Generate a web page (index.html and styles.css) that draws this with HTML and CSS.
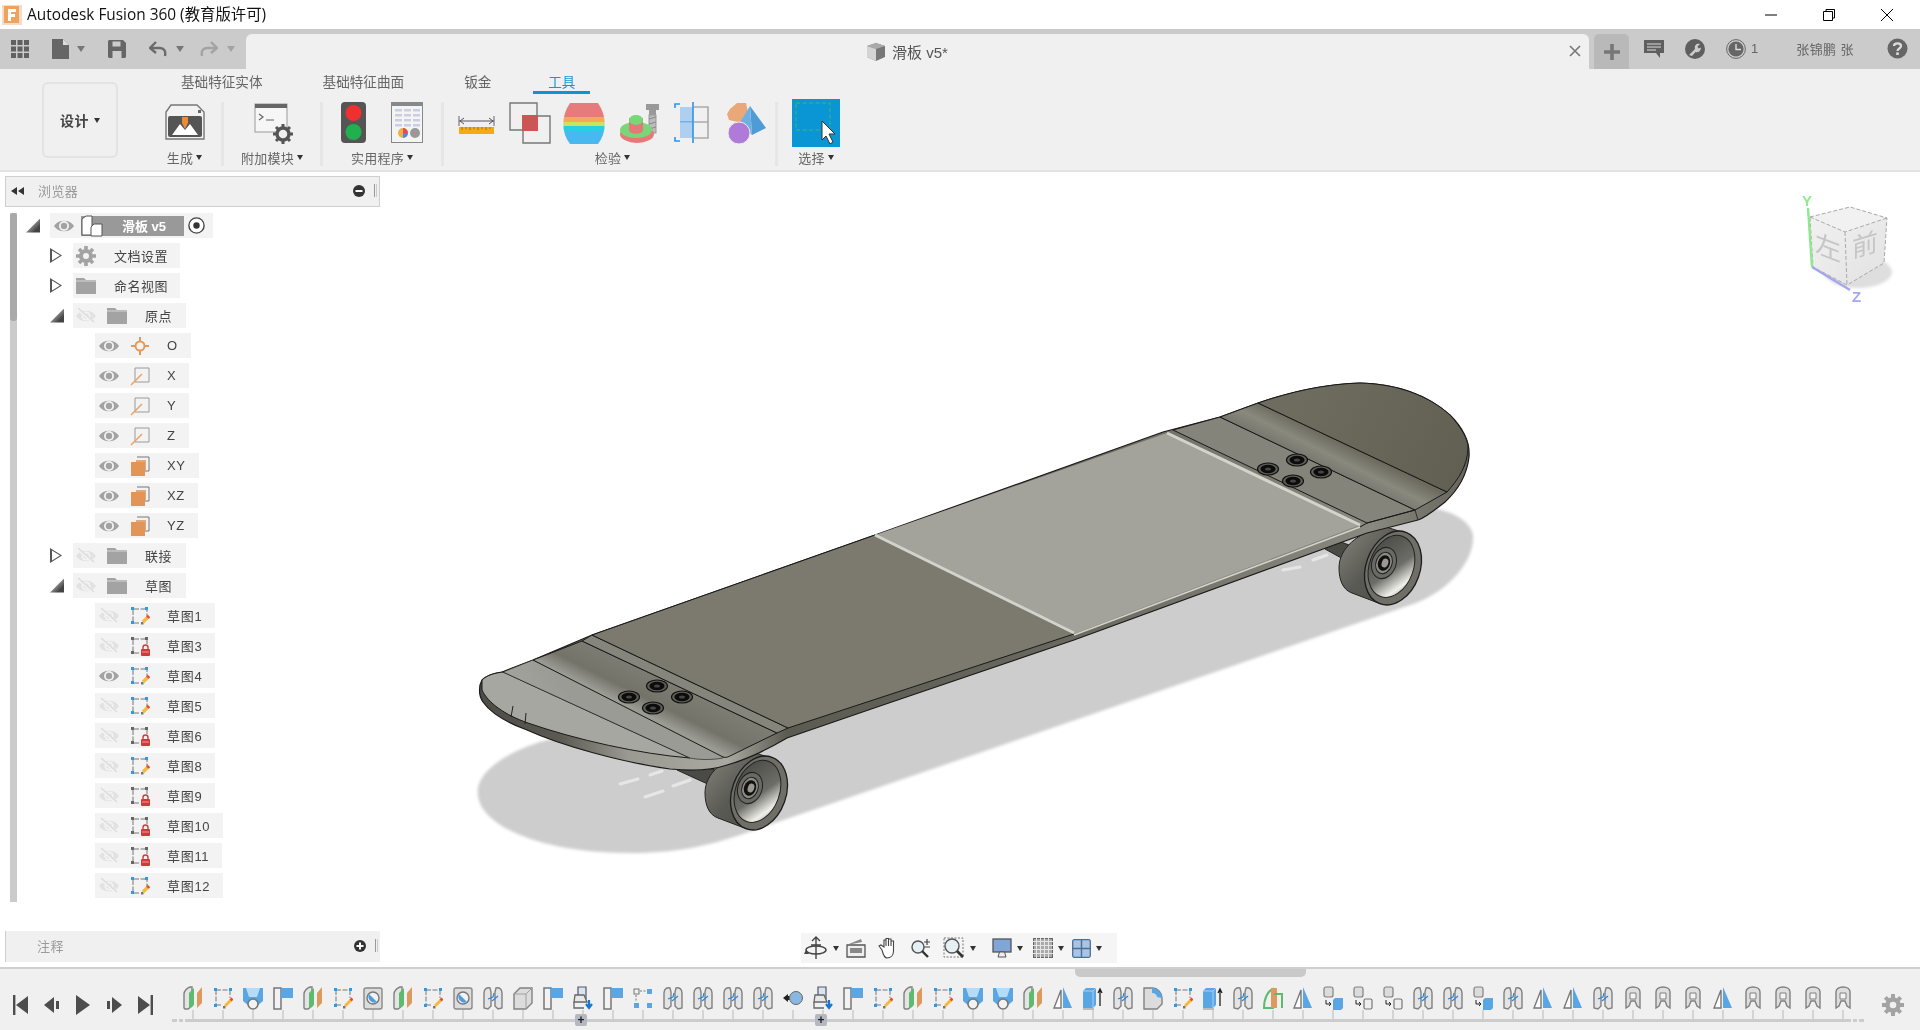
FILE: index.html
```html
<!DOCTYPE html>
<html lang="zh">
<head>
<meta charset="utf-8">
<title>Autodesk Fusion 360</title>
<link rel="stylesheet" href="styles.css">
</head>
<body>
<svg class="defs" width="0" height="0" aria-hidden="true">
<defs>
<symbol id="eye" viewBox="0 0 20 20"><path d="M0 10C4 3 16 3 20 10C16 17 4 17 0 10Z" fill="#a2a2a2"/><circle cx="10" cy="10" r="5" fill="#f3f3f3"/><circle cx="10" cy="10" r="3.2" fill="#a2a2a2"/></symbol>
<symbol id="eyeoff" viewBox="0 0 20 20"><path d="M0 10C4 3 16 3 20 10C16 17 4 17 0 10Z" fill="#e2e2e2"/><circle cx="10" cy="10" r="4.6" fill="#f3f3f3"/><circle cx="10" cy="10" r="2.8" fill="#e2e2e2"/><path d="M2 3L18 17" stroke="#f3f3f3" stroke-width="3"/><path d="M2 2L18 16" stroke="#dcdcdc" stroke-width="1.5"/></symbol>
<symbol id="gear" viewBox="0 0 20 20"><path d="M10 3a7 7 0 1 0 0 14a7 7 0 0 0 0-14Zm0 4a3 3 0 1 1 0 6a3 3 0 0 1 0-6Z" fill="#a3a3a3"/><g stroke="#a3a3a3" stroke-width="3.6"><path d="M10 0V4M10 16V20M0 10H4M16 10H20M3 3L5.8 5.8M14.2 14.2L17 17M17 3L14.2 5.8M5.8 14.2L3 17"/></g></symbol>
<symbol id="folder" viewBox="0 0 20 20"><path d="M0 2H8L10 4H20V18H0Z" fill="#a3a3a3"/><path d="M0 5H20" stroke="#d6d6d6" stroke-width="1"/></symbol>
<symbol id="origin" viewBox="0 0 20 20"><circle cx="10" cy="10" r="4.5" fill="none" stroke="#e29a5c" stroke-width="2"/><path d="M10 1V6M10 14V19M1 10H6M14 10H19" stroke="#e29a5c" stroke-width="2"/></symbol>
<symbol id="axis" viewBox="0 0 20 20"><path d="M5 2H19V16H5Z" fill="none" stroke="#9a9a9a" stroke-width="1"/><path d="M1 19L12 8" stroke="#e8a66c" stroke-width="1.6"/></symbol>
<symbol id="plane" viewBox="0 0 20 20"><path d="M7 1H19V15H15" fill="none" stroke="#777" stroke-width="1"/><path d="M6 4H16V14H6Z" fill="#dcab85"/><path d="M1 6H15V20H1Z" fill="#e29556"/></symbol>
<symbol id="sk-edit" viewBox="0 0 20 20"><path d="M3 3H17M3 3V17M3 17H10" stroke="#777" stroke-width="1" stroke-dasharray="6 1.5" fill="none"/><path d="M17 3V11" stroke="#777" stroke-dasharray="3 1.5"/><g fill="#2c9ae8"><rect x="1" y="1" width="3" height="3"/><rect x="15" y="1" width="3" height="3"/><rect x="1" y="15" width="3" height="3"/></g><rect x="11" y="16" width="2.5" height="2.5" fill="#777"/><path d="M13 16L18 11" stroke="#f4b93e" stroke-width="3.4"/><path d="M17.4 11.6L19 10" stroke="#e84a3a" stroke-width="3.4"/></symbol>
<symbol id="sk-lock" viewBox="0 0 20 20"><path d="M3 3H17M3 3V17M3 17H10" stroke="#777" stroke-width="1" stroke-dasharray="6 1.5" fill="none"/><path d="M17 3V8" stroke="#777"/><g fill="#666"><rect x="1" y="1" width="3" height="3"/><rect x="15" y="1" width="3" height="3"/><rect x="1" y="15" width="3" height="3"/></g><rect x="11" y="13" width="9" height="7" rx="1" fill="#d03a3a"/><path d="M13 13V11.5a2.5 2.5 0 0 1 5 0V13" fill="none" stroke="#d03a3a" stroke-width="1.4"/><path d="M12 16H19" stroke="#ec9a9a"/></symbol>

<symbol id="t-split" viewBox="0 0 20 24"><path d="M1 22V8C1 5 4 2 7 1H9V20L5 23H2Z" fill="#e4e4e4" stroke="#808080" stroke-width="1.4"/><path d="M6 7L11 2V19L6 23Z" fill="#5dbb70"/><path d="M14 7L19 1V17L14 22Z" fill="#dd9a5e"/></symbol>
<symbol id="t-sketch" viewBox="0 0 20 24"><path d="M3 4H17M3 4V19M3 19H9M17 4V12" stroke="#777" stroke-width="1" stroke-dasharray="5 1.5" fill="none"/><g fill="#2c9ae8"><rect x="1" y="2" width="3" height="3"/><rect x="16" y="2" width="3" height="3"/><rect x="1" y="18" width="3" height="3"/></g><rect x="10" y="20" width="2.5" height="2.5" fill="#777"/><path d="M12 20L18 14" stroke="#f4b93e" stroke-width="3"/><path d="M17.6 14.4L19.5 12.5" stroke="#e84a3a" stroke-width="3"/></symbol>
<symbol id="t-press" viewBox="0 0 20 24"><path d="M0 2H20V15L14 20H6L0 15Z" fill="#5aa6e4"/><path d="M3 2H17L14 11H6Z" fill="#b4dcf8"/><circle cx="10" cy="18" r="5" fill="#f2f2f2" stroke="#777" stroke-width="1.6"/></symbol>
<symbol id="t-flag" viewBox="0 0 20 24"><path d="M1 2H8V23H1Z" fill="#f2f2f2" stroke="#777" stroke-width="1.5"/><path d="M8 2H20V12H8Z" fill="#5aa6e4"/></symbol>
<symbol id="t-hole" viewBox="0 0 20 24"><rect x="1" y="2" width="18" height="21" rx="2" fill="#dcdcdc" stroke="#888" stroke-width="1.4"/><circle cx="10" cy="12" r="6" fill="#f2f2f2" stroke="#777" stroke-width="1.4"/><path d="M10 12L6 8A6 6 0 0 0 14 16Z" fill="#4e9bde"/></symbol>
<symbol id="t-loft" viewBox="0 0 20 24"><path d="M1 22V7C1 3 4 1 7 2L8 6V20L5 23ZM19 22V7C19 3 16 1 13 2L12 6V20L15 23Z" fill="#e4e4e4" stroke="#808080" stroke-width="1.4"/><path d="M5 13L10 11L11 7M9 15L15 10" stroke="#2c86d8" stroke-width="1.2" fill="none"/></symbol>
<symbol id="t-box" viewBox="0 0 20 24"><path d="M1 8L7 2H19V17L13 23H1Z" fill="#dcdcdc" stroke="#808080" stroke-width="1.4"/><path d="M1 8H13V23M13 8L19 2" fill="none" stroke="#a0a0a0" stroke-width="1"/></symbol>
<symbol id="t-derive" viewBox="0 0 20 24"><path d="M5 1H13V13H5Z" fill="#d8e4f0" stroke="#556" stroke-width="1.2"/><path d="M2 9H11L14 16H1Z" fill="#e8e8e8" stroke="#666" stroke-width="1.3"/><path d="M1 16V22H11" fill="none" stroke="#666" stroke-width="1.3"/><path d="M16 14V21M13 18L16 22L19 18" stroke="#1a78cc" stroke-width="2.2" fill="none"/></symbol>
<symbol id="t-pattern" viewBox="0 0 20 24"><rect x="1" y="3" width="5" height="5" fill="none" stroke="#777"/><rect x="14" y="3" width="5" height="5" fill="#5aa6e4"/><rect x="14" y="17" width="5" height="5" fill="#5aa6e4"/><rect x="1" y="17" width="5" height="5" fill="#5aa6e4"/><path d="M3 9V16M7 5H13" stroke="#777" stroke-dasharray="2 1.5"/></symbol>
<symbol id="t-joint" viewBox="0 0 20 24"><path d="M0 12L5 8V10H8V14H5V16Z" fill="#222"/><circle cx="13" cy="12" r="6.5" fill="#8ab7e2" stroke="#666"/></symbol>
<symbol id="t-tri" viewBox="0 0 20 24"><path d="M8 4V22H1Z" fill="#fff" stroke="#777" stroke-width="1.4"/><path d="M10 1V22H19Z" fill="#5aa6e4"/></symbol>
<symbol id="t-boxup" viewBox="0 0 20 24"><path d="M0 5L3 2H13V19L10 22H0Z" fill="#5aa6e4"/><path d="M0 5H10V22M10 5L13 2" stroke="#a9d2f2" fill="none"/><path d="M0 23H11" stroke="#aaa" stroke-width="1.5"/><path d="M17 20V4M15 7L17 3L19 7" stroke="#222" stroke-width="1.3" fill="none"/></symbol>
<symbol id="t-fillet" viewBox="0 0 20 24"><path d="M1 23V2H9C15 2 19 7 19 12V18L14 23Z" fill="#dcdcdc" stroke="#808080" stroke-width="1.4"/><path d="M9 2C15 2 19 7 19 12L14 11C14 9 12 7 9 7Z" fill="#5aa6e4"/></symbol>
<symbol id="t-boxmove" viewBox="0 0 20 24"><rect x="1" y="1" width="9" height="10" rx="2" fill="#dcdcdc" stroke="#808080" stroke-width="1.2"/><path d="M3 14V18H8M6 16L8 18L6 20" stroke="#222" fill="none"/><path d="M10 14L12 12H20V22L18 24H10Z" fill="#5aa6e4"/></symbol>
<symbol id="t-copy" viewBox="0 0 20 24"><rect x="1" y="1" width="9" height="10" rx="2" fill="#dcdcdc" stroke="#808080" stroke-width="1.2"/><path d="M3 14V18H8M6 16L8 18L6 20" stroke="#222" fill="none"/><rect x="11" y="13" width="8" height="10" rx="1.5" fill="#eee" stroke="#777" stroke-width="1.2"/></symbol>
<symbol id="t-r" viewBox="0 0 20 24"><path d="M3 22V6C3 3 6 1 10 1C14 1 17 3 17 6V22L14 20L12 15H8L6 20L3 22Z" fill="#dedede" stroke="#808080" stroke-width="1.4"/><path d="M7 7H13V13H7Z" fill="#f4f4f4" stroke="#808080"/></symbol>
<symbol id="t-splitc" viewBox="0 0 20 24"><path d="M1 22C1 12 5 5 10 3V22Z" fill="none" stroke="#5dbb70" stroke-width="2"/><path d="M8 2H14V22H8Z" fill="#dd9a5e"/><path d="M11 8H19V22" fill="none" stroke="#5dbb70" stroke-width="2"/></symbol>
</defs>
</svg>

<header class="titlebar">
  <svg class="logo" viewBox="0 0 20 20"><rect width="20" height="20" fill="#f6dcc6"/><rect x="2" y="1" width="15" height="17" fill="#efa35c"/><path d="M6 4H14V7H9V9H13V12H9V16H6Z" fill="#fff"/></svg>
  <span class="app-title">Autodesk Fusion 360 (教育版许可)</span>
  <div class="winctl">
    <span class="winbtn"><svg width="14" height="14" viewBox="0 0 14 14"><path d="M1 7H13" stroke="#000"/></svg></span>
    <span class="winbtn"><svg width="14" height="14" viewBox="0 0 14 14"><path d="M1.5 3.5H10.5V12.5H1.5ZM4 3.5V1.5H12.5V10H10.5" fill="none" stroke="#000"/></svg></span>
    <span class="winbtn"><svg width="14" height="14" viewBox="0 0 14 14"><path d="M1 1L13 13M13 1L1 13" stroke="#000"/></svg></span>
  </div>
</header>

<div class="appbar">
  <div class="app-left">
    <svg class="i-grid" width="18" height="18" viewBox="0 0 18 18" fill="#616161"><rect width="5" height="5"/><rect x="6.5" width="5" height="5"/><rect x="13" width="5" height="5"/><rect y="6.5" width="5" height="5"/><rect x="6.5" y="6.5" width="5" height="5"/><rect x="13" y="6.5" width="5" height="5"/><rect y="13" width="5" height="5"/><rect x="6.5" y="13" width="5" height="5"/><rect x="13" y="13" width="5" height="5"/></svg>
    <svg class="i-doc" width="17" height="20" viewBox="0 0 17 20"><path d="M0 0H11L17 6V20H0Z" fill="#666"/><path d="M11 0V6H17" fill="#ddd"/></svg>
    <i class="caret c-lg"></i>
    <svg class="i-save" width="18" height="18" viewBox="0 0 18 18"><path d="M1 0H15L18 3V17L17 18H1L0 17V1Z" fill="#666"/><rect x="4.5" y="1.5" width="8" height="5" fill="#ccc"/><rect x="4.5" y="11" width="9" height="7" fill="#ccc"/></svg>
    <svg class="i-undo" width="18" height="16" viewBox="0 0 18 16"><path d="M7 1L1 7L7 12M2 7H11C15 7 17 10 16 15" fill="none" stroke="#6b6b6b" stroke-width="2.4"/></svg>
    <i class="caret c-lg"></i>
    <svg class="i-redo" width="18" height="16" viewBox="0 0 18 16"><path d="M11 1L17 7L11 12M16 7H7C3 7 1 10 2 15" fill="none" stroke="#a3a3a3" stroke-width="2.4"/></svg>
    <i class="caret c-lg light"></i>
  </div>
  <div class="tab">
    <span></span>
    <div class="tab-name">
      <svg width="18" height="18" viewBox="0 0 18 18"><path d="M9 0L18 3V14L9 18L0 14V3Z" fill="#777"/><path d="M0 3L9 6L18 3L9 0Z" fill="#aaa"/><path d="M0 3L9 6V18L0 14Z" fill="#d4d4d4"/></svg>
      <span>滑板 v5*</span>
    </div>
    <svg class="tab-close" width="12" height="12" viewBox="0 0 12 12"><path d="M1 1L11 11M11 1L1 11" stroke="#777" stroke-width="1.6"/></svg>
  </div>
  <div class="tab-plus"><svg width="18" height="18" viewBox="0 0 18 18"><path d="M9 1V17M1 9H17" stroke="#777" stroke-width="3.6"/></svg></div>
  <div class="app-right">
    <svg class="i-chat" width="20" height="20" viewBox="0 0 20 20"><path d="M0 1H20V14H16V19L12 14H0Z" fill="#5f5f5f"/><path d="M3 5H17M3 8H17M3 11H12" stroke="#ddd"/></svg>
    <svg class="i-wrench" width="20" height="20" viewBox="0 0 20 20"><circle cx="10" cy="10" r="10" fill="#5f5f5f"/><path d="M4 16L10 10C9 6 12 4 15 5L12.5 7.5L13.5 9.5L16 8.5C16 12 13 14 10.5 13L7 17Z" fill="#ccc"/></svg>
    <svg class="i-clock" width="20" height="20" viewBox="0 0 20 20"><circle cx="10" cy="10" r="9.4" fill="none" stroke="#666"/><circle cx="10" cy="10" r="7.6" fill="#666"/><path d="M10 5V10.5H15" stroke="#ddd" stroke-width="1.4" fill="none"/></svg>
    <span class="job-num">1</span>
    <span class="user">张锦鹏 张</span>
    <svg class="i-help" width="21" height="21" viewBox="0 0 21 21"><circle cx="10.5" cy="10.5" r="10" fill="#666"/><path d="M7 8C7 4.5 14 4.5 14 8C14 10.5 10.5 10.5 10.5 13" fill="none" stroke="#ddd" stroke-width="2.2"/><rect x="9.2" y="14.4" width="2.6" height="2.6" fill="#ddd"/></svg>
  </div>
</div>

<div class="ribbon">
  <div class="design-btn"><span>设计</span><i class="caret c-sm dark"></i></div>
  <div class="ribbon-main">
    <nav class="tabs">
      <span class="rtab">基础特征实体</span>
      <span class="rtab">基础特征曲面</span>
      <span class="rtab">钣金</span>
      <span class="rtab active">工具</span>
    </nav>
    <div class="groups">
      <section class="group g-create">
        <div class="g-icons">
          <svg width="44" height="44" viewBox="0 0 44 44"><path d="M8 3H34L41 10V37H3V10Z" fill="#f2f2f2" stroke="#777" stroke-width="1.4"/><rect x="5" y="14" width="34" height="21" rx="2" fill="#555"/><path d="M9 33L17 22L22 28L27 22L35 33Z" fill="#fff"/><path d="M19 15H25V21L22 27L19 21Z" fill="#e88c3c"/><rect x="35" y="8" width="3" height="3" fill="#666"/></svg>
        </div>
        <div class="g-label">生成<i class="caret c-sm dark"></i></div>
      </section>
      <section class="group g-addin">
        <div class="g-icons">
          <svg width="44" height="44" viewBox="0 0 44 44"><rect x="5" y="2" width="32" height="28" fill="#f6f6f6" stroke="#999"/><rect x="5" y="2" width="32" height="4" fill="#666"/><path d="M9 12L13 15L9 18M16 18H24" stroke="#666" fill="none" stroke-width="1.2"/><circle cx="33" cy="32" r="6" fill="#f0f0f0" stroke="#555" stroke-width="3.4"/><path d="M33 22V26M33 38V42M23 32H27M39 32H43M26 25L29 28M37 36L40 39M40 25L37 28M29 36L26 39" stroke="#555" stroke-width="3"/></svg>
        </div>
        <div class="g-label">附加模块<i class="caret c-sm dark"></i></div>
      </section>
      <section class="group g-util">
        <div class="g-icons util-icons">
          <svg width="26" height="42" viewBox="0 0 26 42"><rect width="25" height="41" rx="4" fill="#555"/><circle cx="12.5" cy="11" r="8" fill="#ef3030"/><circle cx="12.5" cy="30" r="8" fill="#20b050"/></svg>
          <svg width="32" height="42" viewBox="0 0 32 42"><rect x=".5" y=".5" width="31" height="40" fill="#f4f4f4" stroke="#888"/><rect x="1" y="1" width="30" height="3" fill="#888"/><g fill="#c9cfe0"><rect x="4" y="7" width="7" height="2.5"/><rect x="13" y="7" width="7" height="2.5"/><rect x="22" y="7" width="7" height="2.5"/><rect x="4" y="12" width="7" height="2.5"/><rect x="13" y="12" width="7" height="2.5"/><rect x="22" y="12" width="7" height="2.5"/><rect x="4" y="17" width="7" height="2.5"/><rect x="13" y="17" width="7" height="2.5"/><rect x="22" y="17" width="7" height="2.5"/><rect x="4" y="22" width="7" height="2.5"/><rect x="13" y="22" width="7" height="2.5"/><rect x="22" y="22" width="7" height="2.5"/></g><circle cx="12" cy="31" r="5" fill="#f0b040"/><path d="M12 31V26A5 5 0 0 1 17 31Z" fill="#e05050"/><path d="M12 31H17A5 5 0 0 1 12 36Z" fill="#4a8ad8"/><circle cx="24" cy="31" r="5" fill="#999"/></svg>
        </div>
        <div class="g-label">实用程序<i class="caret c-sm dark"></i></div>
      </section>
      <section class="group g-inspect">
        <div class="g-icons inspect-icons">
          <svg width="44" height="44" viewBox="0 0 44 44"><path d="M5 14V24M40 14V24" stroke="#666" stroke-width="1"/><path d="M5 19H40M10 16L6 19L10 22M35 16L39 19L35 22" stroke="#555" fill="none"/><rect x="5" y="25" width="35" height="7" fill="#f5a818"/><path d="M8 25V28M12 25V27M16 25V28M20 25V27M24 25V28M28 25V27M32 25V28M36 25V27" stroke="#a87010"/></svg>
          <svg width="44" height="44" viewBox="0 0 44 44"><path d="M2 1H29V28H2ZM15 14H42V41H15Z" fill="none" stroke="#777" stroke-width="1.4"/><rect x="14" y="13" width="16" height="16" fill="#cc5555"/></svg>
          <svg width="44" height="44" viewBox="0 0 44 44"><defs><clipPath id="barrel"><path d="M8 1H36C45 14 45 30 36 42H8C-1 30 -1 14 8 1Z"/></clipPath></defs><g clip-path="url(#barrel)"><rect y="0" width="44" height="15" fill="#e77b7b"/><rect y="15" width="44" height="5" fill="#f4a860"/><rect y="20" width="44" height="4" fill="#cfe060"/><rect y="24" width="44" height="5" fill="#26d0e0"/><rect y="29" width="44" height="14" fill="#4ab8f0"/></g></svg>
          <svg width="44" height="44" viewBox="0 0 44 44"><path d="M30 2H43V8H40V13H33V8H30Z" fill="#999"/><rect x="33" y="13" width="7" height="18" fill="#bbb" stroke="#999"/><path d="M33 17L40 15M33 22L40 20M33 27L40 25" stroke="#888"/><ellipse cx="21" cy="32" rx="17" ry="9" fill="#e57878"/><ellipse cx="20" cy="28" rx="16" ry="8" fill="#78d878"/><path d="M13 16V28C13 33 27 33 27 28V16Z" fill="#e57878"/><ellipse cx="20" cy="18" rx="7" ry="5" fill="#78d878"/></svg>
          <svg width="44" height="44" viewBox="0 0 44 44"><path d="M24 5H38V36H24M24 20H38" fill="none" stroke="#aaa" stroke-width="1.6"/><rect x="10" y="5" width="13" height="15" fill="#aed0ee"/><rect x="10" y="21" width="13" height="15" fill="#aed0ee"/><path d="M10 2H5V6M5 35V39H10M23 0V41" fill="none" stroke="#2d94e8" stroke-width="1.6"/><path d="M10 20H23" stroke="#2d94e8"/></svg>
          <svg width="44" height="44" viewBox="0 0 44 44"><path d="M6 7L13 1H22L24 10L18 21L5 18L3 12Z" fill="#eaa878"/><path d="M26 4L42 26L28 33Z" fill="#4e9bd6"/><path d="M26 4L15 22L28 33Z" fill="#6fb0e2"/><circle cx="15" cy="31" r="11" fill="#b07ad8" stroke="#eee"/></svg>
        </div>
        <div class="g-label">检验<i class="caret c-sm dark"></i></div>
      </section>
      <section class="group g-select">
        <div class="g-icons select-icon">
          <svg width="48" height="48" viewBox="0 0 48 48"><rect width="48" height="48" fill="#0a96d4"/><rect x="4" y="4" width="34" height="27" fill="none" stroke="#3cb878" stroke-width="1" stroke-dasharray="4 2.5"/><path d="M30 22V41L34 37L38 45L41 43L37 35H43Z" fill="#fff" stroke="#333"/></svg>
        </div>
        <div class="g-label">选择<i class="caret c-sm dark"></i></div>
      </section>
    </div>
  </div>
</div>

<main class="viewport">
  <svg class="scene" viewBox="0 172 1920 795" aria-label="滑板模型">
    <defs>
      <linearGradient id="gSide" gradientUnits="userSpaceOnUse" x1="480" y1="0" x2="1470" y2="0">
        <stop offset="0" stop-color="#4d4d46"/><stop offset=".08" stop-color="#5a5a52"/><stop offset=".15" stop-color="#9a9a92"/><stop offset=".25" stop-color="#a9a9a2"/><stop offset=".31" stop-color="#5c5b52"/><stop offset=".6" stop-color="#6a695f"/><stop offset=".9" stop-color="#8a897f"/><stop offset="1" stop-color="#66645a"/>
      </linearGradient>
      <linearGradient id="gPanelL" gradientUnits="userSpaceOnUse" x1="628" y1="706" x2="645" y2="672">
        <stop offset="0" stop-color="#9a9b93"/><stop offset=".4" stop-color="#74736a"/><stop offset="1" stop-color="#7d7c72"/>
      </linearGradient>
      <linearGradient id="gPanelN" gradientUnits="userSpaceOnUse" x1="500" y1="720" x2="560" y2="680">
        <stop offset="0" stop-color="#a6a8a1"/><stop offset="1" stop-color="#9a9b94"/>
      </linearGradient>
      <linearGradient id="gPanelB" gradientUnits="userSpaceOnUse" x1="1317" y1="463" x2="1330" y2="437">
        <stop offset="0" stop-color="#7a7970"/><stop offset=".45" stop-color="#8a897e"/><stop offset="1" stop-color="#6c6a5f"/>
      </linearGradient>
      <linearGradient id="gCap" gradientUnits="userSpaceOnUse" x1="1300" y1="400" x2="1450" y2="480">
        <stop offset="0" stop-color="#6e6b5f"/><stop offset="1" stop-color="#625f53"/>
      </linearGradient>
      <linearGradient id="gBody" x1="0" y1="0" x2="1" y2="1">
        <stop offset="0" stop-color="#87877f"/><stop offset=".5" stop-color="#5a5a54"/><stop offset="1" stop-color="#4c4c46"/>
      </linearGradient>
      <linearGradient id="gFace" x1="0" y1="0" x2="1" y2="1">
        <stop offset="0" stop-color="#44443f"/><stop offset=".55" stop-color="#6d6d67"/><stop offset=".8" stop-color="#f0f0ea"/><stop offset="1" stop-color="#77776f"/>
      </linearGradient>
      <linearGradient id="gCube" x1="0" y1="0" x2="1" y2="1">
        <stop offset="0" stop-color="#f2f2f2"/><stop offset="1" stop-color="#e2e2e2"/>
      </linearGradient>
      <g id="bolt">
        <ellipse rx="10.5" ry="6" fill="#5f5f57" stroke="#111" stroke-width="1.2"/>
        <ellipse rx="7.6" ry="4.2" fill="#0c0c0c"/>
        <ellipse rx="3" ry="1.6" fill="#444"/>
      </g>
      <g id="wheel">
        <path d="M12 -35L-10 -42C-35 -35 -54 -20 -54 0C-54 12 -50 22 -41 25L-12 36Z" fill="url(#gBody)" stroke="#222"/>
        <ellipse rx="27" ry="38" transform="rotate(20)" fill="#6f6f68" stroke="#1c1c1c" stroke-width="1.3"/>
        <ellipse cx="-2" cy="-1" rx="22" ry="32" transform="rotate(20)" fill="url(#gFace)" stroke="#222"/>
        <ellipse cx="-9" cy="-5" rx="12" ry="16" transform="rotate(20 -9 -5)" fill="#6a6a64" stroke="#222"/>
        <ellipse cx="-9" cy="-5" rx="8" ry="11" transform="rotate(20 -9 -5)" fill="#8c8c84" stroke="#222"/>
        <ellipse cx="-9" cy="-5" rx="6" ry="8" transform="rotate(20 -9 -5)" fill="#111"/>
        <ellipse cx="-8" cy="-5" rx="3.2" ry="4.6" transform="rotate(20 -8 -5)" fill="#9a9a92"/>
      </g>
    </defs>

    <path class="soft" d="M540 742C500 755 475 775 478 795C480 825 540 855 640 853C680 852 710 845 740 835L1416 603C1450 590 1475 560 1473 535C1470 520 1450 510 1430 508L1200 500L700 700Z" fill="#cdcdcd"/>
    <g stroke="#e6e6e6" stroke-width="3" stroke-linecap="round">
      <path d="M620 784L638 779M650 775L662 771M645 797L663 791M673 786L690 780M1283 570L1300 567M1313 560L1327 555"/>
    </g>

    <path d="M677 770L712 786L720 772L690 760Z" fill="#4b4b45" stroke="#222"/>
    <path d="M1325 549L1345 560L1352 546L1335 540Z" fill="#4b4b45" stroke="#222"/>
    <use href="#wheel" x="759" y="793"/>
    <use href="#wheel" x="1393" y="568"/>

    <path d="M482 680C487 675 495 673 502 672L533 660L592 635L875 535L1163 432L1220 417L1258 403C1290 392 1325 384 1360 383C1400 384 1430 397 1450 415C1465 430 1470 445 1469 457C1467 475 1458 490 1445 502C1432 512 1425 518 1418 520L1367 533L1074 640L880 706L787 738C770 748 745 760 727 765C710 771 690 771 670 769C620 762 560 745 527 730C505 722 490 712 483 702C478 695 479 685 482 680Z" fill="url(#gSide)" stroke="#1a1a1a" stroke-width="1.2"/>

    <path d="M482 680C487 675 495 673 503 672L690 758C640 754 577 740 528 723C505 715 488 703 482 690Z" fill="#a5a7a0" stroke="#1a1a1a"/>
    <path d="M503 672L533 660L723 752L723 758C712 760 700 760 690 758Z" fill="url(#gPanelN)" stroke="#1a1a1a" stroke-width=".6"/>
    <path d="M533 660L582 641L777 733L732 755C728 757 726 758 723 757Z" fill="url(#gPanelL)" stroke="#1a1a1a"/>
    <path d="M582 641L592 635L788 728L777 733Z" fill="#85857b" stroke="#1a1a1a"/>
    <path d="M592 635L875 535L1074 634L788 728Z" fill="#7c7a6f" stroke="#1a1a1a"/>
    <path d="M875 535L1167 433L1360 525L1074 634Z" fill="#a3a39b"/>
    <path d="M875 535L1074 633M1167 433L1360 525" stroke="#d3d3cc" stroke-width="3"/>
    <path d="M1074 635L1360 527" stroke="#d3d3cc" stroke-width="1.6"/>
    <path d="M1173 430L1220 417L1415 510L1367 523Z" fill="#85847a" stroke="#1a1a1a"/>
    <path d="M1220 417L1258 403L1447 492L1415 510Z" fill="url(#gPanelB)" stroke="#1a1a1a"/>
    <path d="M1258 403C1290 392 1325 384 1360 383C1400 384 1430 397 1450 415C1462 428 1468 440 1468 447C1468 465 1458 480 1447 492Z" fill="url(#gCap)" stroke="#1a1a1a"/>
    <path d="M1360 527L1367 523L1415 510" stroke="#1a1a1a" fill="none"/>
    <path d="M1415 510L1418 520" stroke="#1a1a1a" fill="none" stroke-width=".8"/>
    <path d="M513 706L511 717M526 713L525 724" stroke="#222"/>

    <use href="#bolt" x="657" y="686"/><use href="#bolt" x="629" y="697"/><use href="#bolt" x="682" y="697"/><use href="#bolt" x="653" y="708"/>
    <use href="#bolt" x="1297" y="460"/><use href="#bolt" x="1268" y="469"/><use href="#bolt" x="1321" y="472"/><use href="#bolt" x="1293" y="481"/>

    <ellipse class="soft" cx="1858" cy="272" rx="34" ry="16" fill="#dedede"/>
    <path d="M1810 217L1850 207L1887 218L1884 263L1847 285L1813 267Z" fill="url(#gCube)"/>
    <path d="M1810 217L1850 207L1887 218L1845 232Z" fill="#f1f1f1"/>
    <path d="M1810 217L1850 207L1887 218L1884 263L1847 285L1813 267ZM1810 217L1845 232L1887 218M1845 232L1847 285" fill="none" stroke="#aaa" stroke-dasharray="4 2"/>
    <text class="cube-t" transform="matrix(1 .38 0 1 1815 252)">左</text>
    <text class="cube-t" transform="matrix(1 -.3 0 1 1852 258)">前</text>
    <path d="M1808 208L1812 267" stroke="#8ee88e" stroke-width="2.4"/>
    <path d="M1812 267L1850 290" stroke="#a6a6ee" stroke-width="2.4"/>
    <text class="axis-y" x="1802" y="206">Y</text>
    <text class="axis-z" x="1852" y="302">Z</text>
  </svg>

  <div class="panel browser">
    <svg class="rew" width="13" height="8" viewBox="0 0 13 8" fill="#333"><path d="M6 0V8L0 4ZM13 0V8L7 4Z"/></svg>
    <span class="panel-title">浏览器</span>
    <svg class="panel-btn" width="12" height="12" viewBox="0 0 12 12"><circle cx="6" cy="6" r="6" fill="#333"/><rect x="2.5" y="5" width="7" height="2" fill="#fff"/></svg>
    <i class="panel-grip"></i>
  </div>

  <div class="tree-scroll"><i class="tree-thumb"></i></div>

  <div class="tree">
    <div class="row d0"><i class="tw open"></i><div class="pill p0">
      <svg class="ic"><use href="#eye"/></svg>
      <div class="comp"><svg width="22" height="22" viewBox="0 0 22 22"><path d="M1 4L5 1H11V20H1Z" fill="#fff" stroke="#555"/><path d="M10 12L13 9H21V21H10Z" fill="#fff" stroke="#555"/></svg><span>滑板 v5</span></div>
      <svg class="radio" width="17" height="17" viewBox="0 0 17 17"><circle cx="8.5" cy="8.5" r="7.6" fill="#fff" stroke="#444" stroke-width="1.4"/><circle cx="8.5" cy="8.5" r="3.2" fill="#333"/></svg>
    </div></div>

    <div class="row d1"><i class="tw closed"></i><div class="pill p1"><svg class="ic"><use href="#gear"/></svg><span class="lab">文档设置</span></div></div>
    <div class="row d1"><i class="tw closed"></i><div class="pill p1"><svg class="ic"><use href="#folder"/></svg><span class="lab">命名视图</span></div></div>
    <div class="row d1"><i class="tw open"></i><div class="pill p1e"><svg class="ic"><use href="#eyeoff"/></svg><svg class="ic"><use href="#folder"/></svg><span class="lab">原点</span></div></div>

    <div class="row d2"><div class="pill p2"><svg class="ic"><use href="#eye"/></svg><svg class="ic"><use href="#origin"/></svg><span class="lab2">O</span></div></div>
    <div class="row d2"><div class="pill p2"><svg class="ic"><use href="#eye"/></svg><svg class="ic"><use href="#axis"/></svg><span class="lab2">X</span></div></div>
    <div class="row d2"><div class="pill p2"><svg class="ic"><use href="#eye"/></svg><svg class="ic"><use href="#axis"/></svg><span class="lab2">Y</span></div></div>
    <div class="row d2"><div class="pill p2"><svg class="ic"><use href="#eye"/></svg><svg class="ic"><use href="#axis"/></svg><span class="lab2">Z</span></div></div>
    <div class="row d2"><div class="pill p2"><svg class="ic"><use href="#eye"/></svg><svg class="ic"><use href="#plane"/></svg><span class="lab2">XY</span></div></div>
    <div class="row d2"><div class="pill p2"><svg class="ic"><use href="#eye"/></svg><svg class="ic"><use href="#plane"/></svg><span class="lab2">XZ</span></div></div>
    <div class="row d2"><div class="pill p2"><svg class="ic"><use href="#eye"/></svg><svg class="ic"><use href="#plane"/></svg><span class="lab2">YZ</span></div></div>

    <div class="row d1"><i class="tw closed"></i><div class="pill p1e"><svg class="ic"><use href="#eyeoff"/></svg><svg class="ic"><use href="#folder"/></svg><span class="lab">联接</span></div></div>
    <div class="row d1"><i class="tw open"></i><div class="pill p1e"><svg class="ic"><use href="#eyeoff"/></svg><svg class="ic"><use href="#folder"/></svg><span class="lab">草图</span></div></div>

    <div class="row d2"><div class="pill p2"><svg class="ic"><use href="#eyeoff"/></svg><svg class="ic"><use href="#sk-edit"/></svg><span class="lab2">草图1</span></div></div>
    <div class="row d2"><div class="pill p2"><svg class="ic"><use href="#eyeoff"/></svg><svg class="ic"><use href="#sk-lock"/></svg><span class="lab2">草图3</span></div></div>
    <div class="row d2"><div class="pill p2"><svg class="ic"><use href="#eye"/></svg><svg class="ic"><use href="#sk-edit"/></svg><span class="lab2">草图4</span></div></div>
    <div class="row d2"><div class="pill p2"><svg class="ic"><use href="#eyeoff"/></svg><svg class="ic"><use href="#sk-edit"/></svg><span class="lab2">草图5</span></div></div>
    <div class="row d2"><div class="pill p2"><svg class="ic"><use href="#eyeoff"/></svg><svg class="ic"><use href="#sk-lock"/></svg><span class="lab2">草图6</span></div></div>
    <div class="row d2"><div class="pill p2"><svg class="ic"><use href="#eyeoff"/></svg><svg class="ic"><use href="#sk-edit"/></svg><span class="lab2">草图8</span></div></div>
    <div class="row d2"><div class="pill p2"><svg class="ic"><use href="#eyeoff"/></svg><svg class="ic"><use href="#sk-lock"/></svg><span class="lab2">草图9</span></div></div>
    <div class="row d2"><div class="pill p2"><svg class="ic"><use href="#eyeoff"/></svg><svg class="ic"><use href="#sk-lock"/></svg><span class="lab2">草图10</span></div></div>
    <div class="row d2"><div class="pill p2"><svg class="ic"><use href="#eyeoff"/></svg><svg class="ic"><use href="#sk-lock"/></svg><span class="lab2">草图11</span></div></div>
    <div class="row d2"><div class="pill p2"><svg class="ic"><use href="#eyeoff"/></svg><svg class="ic"><use href="#sk-edit"/></svg><span class="lab2">草图12</span></div></div>
  </div>

  <div class="panel notes">
    <span class="panel-title">注释</span>
    <svg class="panel-btn" width="12" height="12" viewBox="0 0 12 12"><circle cx="6" cy="6" r="6" fill="#333"/><path d="M2.5 6H9.5M6 2.5V9.5" stroke="#fff" stroke-width="2"/></svg>
    <i class="panel-grip"></i>
  </div>

  <div class="navbar">
    <svg class="n-orbit" width="24" height="24" viewBox="0 0 24 24"><path d="M12 1V23M8 5L12 1L16 5M7 9H17" stroke="#444" stroke-width="1.4" fill="none"/><ellipse cx="12" cy="14" rx="10" ry="4" fill="none" stroke="#444" stroke-width="1.5"/><path d="M2 14L0 18L5 18" fill="#444"/></svg><i class="caret c-sm dark"></i>
    <svg class="n-look" width="20" height="20" viewBox="0 0 20 20"><path d="M1 7H19V19H1Z" fill="#eee" stroke="#555" stroke-width="1.3"/><rect x="4" y="10" width="12" height="5" fill="#888"/><path d="M3 6L15 1L16 4L6 6Z" fill="#888"/></svg>
    <svg class="n-pan" width="20" height="22" viewBox="0 0 20 22"><path d="M4 13L1 9L3 8L6 10V3H8V9V1.5H10.5V9V2H13V9V4H15.5V14C15.5 18 13 21 9 21C6 21 5 17 4 13Z" fill="#fff" stroke="#444" stroke-width="1.1"/></svg>
    <svg class="n-zoom" width="22" height="20" viewBox="0 0 22 20"><circle cx="8" cy="9" r="6" fill="#e4f0f4" stroke="#555" stroke-width="1.4"/><path d="M12 13L18 19" stroke="#333" stroke-width="2.4"/><path d="M17 1V7M14 4H20M14 9H20" stroke="#444" stroke-width="1.2"/></svg>
    <svg class="n-fit" width="22" height="22" viewBox="0 0 22 22"><rect x="1" y="1" width="19" height="19" fill="none" stroke="#777" stroke-dasharray="2 1.5"/><circle cx="9" cy="9" r="7" fill="#e4f0f4" stroke="#555" stroke-width="1.4"/><path d="M14 14L20 20" stroke="#333" stroke-width="2.6"/></svg><i class="caret c-sm dark"></i>
    <svg class="n-disp" width="20" height="20" viewBox="0 0 20 20"><rect x="1" y="1" width="18" height="13" fill="#7fa6d6" stroke="#555" stroke-width="1.3"/><path d="M6 19H14L12.5 14H7.5Z" fill="#eee" stroke="#555"/></svg><i class="caret c-sm dark"></i>
    <svg class="n-grid" width="20" height="20" viewBox="0 0 20 20"><rect x=".5" y=".5" width="19" height="19" fill="#aaa" stroke="#666"/><path d="M3.5 0V20M7.5 0V20M11.5 0V20M15.5 0V20M0 3.5H20M0 7.5H20M0 11.5H20M0 15.5H20" stroke="#e6e6e6"/></svg><i class="caret c-sm dark"></i>
    <svg class="n-view" width="19" height="19" viewBox="0 0 19 19"><rect x=".7" y=".7" width="17.6" height="17.6" rx="1.5" fill="#a9c4e4" stroke="#4e6f94" stroke-width="1.3"/><path d="M0 9.5H19M9.5 0V19" stroke="#4e6f94" stroke-width="1.4"/></svg><i class="caret c-sm dark"></i>
  </div>
</main>

<footer class="timeline">
  <i class="h-thumb"></i>
  <div class="playback">
    <svg width="16" height="20" viewBox="0 0 16 20" fill="#4d4d4d"><rect width="2.4" height="20"/><path d="M15 1V19L3 10Z"/></svg>
    <svg width="16" height="20" viewBox="0 0 16 20" fill="#4d4d4d"><path d="M10 2V18L0 10Z"/><rect x="12" y="6" width="3" height="8"/></svg>
    <svg width="16" height="20" viewBox="0 0 16 20" fill="#4d4d4d"><path d="M1 0V20L15 10Z"/></svg>
    <svg width="16" height="20" viewBox="0 0 16 20" fill="#4d4d4d"><rect x="1" y="6" width="3" height="8"/><path d="M6 2V18L16 10Z"/></svg>
    <svg width="16" height="20" viewBox="0 0 16 20" fill="#4d4d4d"><path d="M1 1V19L13 10Z"/><rect x="13.6" width="2.4" height="20"/></svg>
  </div>
  <div class="track">
    <div class="tl-items">
      <div class="tl"><svg><use href="#t-split"/></svg></div><div class="tl"><svg><use href="#t-sketch"/></svg></div><div class="tl"><svg><use href="#t-press"/></svg></div><div class="tl"><svg><use href="#t-flag"/></svg></div>
      <div class="tl"><svg><use href="#t-split"/></svg></div><div class="tl"><svg><use href="#t-sketch"/></svg></div><div class="tl"><svg><use href="#t-hole"/></svg></div><div class="tl"><svg><use href="#t-split"/></svg></div>
      <div class="tl"><svg><use href="#t-sketch"/></svg></div><div class="tl"><svg><use href="#t-hole"/></svg></div><div class="tl"><svg><use href="#t-loft"/></svg></div><div class="tl"><svg><use href="#t-box"/></svg></div>
      <div class="tl"><svg><use href="#t-flag"/></svg></div><div class="tl mark"><svg><use href="#t-derive"/></svg></div><div class="tl"><svg><use href="#t-flag"/></svg></div><div class="tl"><svg><use href="#t-pattern"/></svg></div>
      <div class="tl"><svg><use href="#t-loft"/></svg></div><div class="tl"><svg><use href="#t-loft"/></svg></div><div class="tl"><svg><use href="#t-loft"/></svg></div><div class="tl"><svg><use href="#t-loft"/></svg></div>
      <div class="tl"><svg><use href="#t-joint"/></svg></div><div class="tl mark"><svg><use href="#t-derive"/></svg></div><div class="tl"><svg><use href="#t-flag"/></svg></div><div class="tl"><svg><use href="#t-sketch"/></svg></div>
      <div class="tl"><svg><use href="#t-split"/></svg></div><div class="tl"><svg><use href="#t-sketch"/></svg></div><div class="tl"><svg><use href="#t-press"/></svg></div><div class="tl"><svg><use href="#t-press"/></svg></div>
      <div class="tl"><svg><use href="#t-split"/></svg></div><div class="tl"><svg><use href="#t-tri"/></svg></div><div class="tl"><svg><use href="#t-boxup"/></svg></div><div class="tl"><svg><use href="#t-loft"/></svg></div>
      <div class="tl"><svg><use href="#t-fillet"/></svg></div><div class="tl"><svg><use href="#t-sketch"/></svg></div><div class="tl"><svg><use href="#t-boxup"/></svg></div><div class="tl"><svg><use href="#t-loft"/></svg></div>
      <div class="tl"><svg><use href="#t-splitc"/></svg></div><div class="tl"><svg><use href="#t-tri"/></svg></div><div class="tl"><svg><use href="#t-boxmove"/></svg></div><div class="tl"><svg><use href="#t-copy"/></svg></div>
      <div class="tl"><svg><use href="#t-copy"/></svg></div><div class="tl"><svg><use href="#t-loft"/></svg></div><div class="tl"><svg><use href="#t-loft"/></svg></div><div class="tl"><svg><use href="#t-boxmove"/></svg></div>
      <div class="tl"><svg><use href="#t-loft"/></svg></div><div class="tl"><svg><use href="#t-tri"/></svg></div><div class="tl"><svg><use href="#t-tri"/></svg></div><div class="tl"><svg><use href="#t-loft"/></svg></div>
      <div class="tl"><svg><use href="#t-r"/></svg></div><div class="tl"><svg><use href="#t-r"/></svg></div><div class="tl"><svg><use href="#t-r"/></svg></div><div class="tl"><svg><use href="#t-tri"/></svg></div>
      <div class="tl"><svg><use href="#t-r"/></svg></div><div class="tl"><svg><use href="#t-r"/></svg></div><div class="tl"><svg><use href="#t-r"/></svg></div><div class="tl"><svg><use href="#t-r"/></svg></div>
    </div>
    <div class="tl-line"></div>
  </div>
  <svg class="tl-gear" width="22" height="22" viewBox="0 0 20 20"><use href="#gear"/></svg>
</footer>
</body>
</html>
```
FILE: styles.css
```css
* { box-sizing: border-box; }
html, body { margin: 0; height: 100%; }
body {
  width: 1920px;
  height: 1030px;
  overflow: hidden;
  display: flex;
  flex-direction: column;
  background: #fff;
  color: #555;
  font: 13px "Liberation Sans", "Noto Sans CJK SC", sans-serif;
  filter: blur(.4px);
}
.defs { position: absolute; }
svg { display: block; flex: none; }

/* title bar */
.titlebar { height: 29px; display: flex; align-items: center; padding-left: 2px; background: #fff; }
.logo { width: 20px; height: 20px; margin-right: 5px; }
.app-title { font: 15.4px "Open Sans", "Noto Sans CJK SC", sans-serif; color: #111; padding-bottom: 2px; }
.winctl { margin-left: auto; display: flex; padding-right: 4px; }
.winbtn { width: 58px; display: flex; justify-content: center; }

/* app bar */
.appbar { height: 40px; flex: none; display: flex; background: #cbcbcb; }
.app-left { width: 246px; display: flex; align-items: center; padding-left: 11px; }
.i-doc { margin-left: 23px; }
.app-left .caret:nth-of-type(1) { margin-left: 8px; }
.i-save { margin-left: 23px; }
.i-undo { margin-left: 23px; }
.i-undo + .caret { margin-left: 9px; }
.i-redo { margin-left: 16px; }
.i-redo + .caret { margin-left: 9px; }
.tab {
  width: 1343px; margin-top: 5px; border-radius: 6px 6px 0 0; background: #f0f0f0;
  display: grid; grid-template-columns: 1fr auto 1fr; align-items: center;
}
.tab-name { display: flex; align-items: center; gap: 7px; font-size: 15px; color: #555; margin-left: -20px; }
.tab-close { justify-self: end; margin-right: 8px; margin-bottom: 1px; }
.tab-plus {
  width: 35px; margin: 5px 0 0 5px; border-radius: 5px 5px 0 0; background: #b9b9b9;
  display: flex; align-items: center; justify-content: center;
}
.app-right { flex: 1; display: flex; align-items: center; padding-bottom: 1px; }
.i-chat { margin-left: 15px; }
.i-wrench { margin-left: 21px; }
.i-clock { margin-left: 21px; }
.job-num { margin-left: 5px; font-size: 13px; color: #666; }
.user { margin-left: 38px; font-size: 13px; color: #666; letter-spacing: .4px; }
.i-help { margin-left: 33px; }

/* ribbon */
.ribbon { height: 103px; flex: none; display: flex; background: #f0f0f0; border-bottom: 2px solid #e2e2e2; padding-left: 42px; }
.design-btn {
  width: 76px; height: 76px; margin-top: 13px; border: 2px solid #e3e3e3; border-radius: 6px;
  display: flex; align-items: center; justify-content: center; gap: 5px;
  font-size: 14px; font-weight: 700; color: #444; letter-spacing: .5px;
}
.ribbon-main { flex: 1; display: flex; flex-direction: column; }
.tabs { display: flex; gap: 30px; padding-left: 48px; height: 33px; }
.rtab { height: 25px; padding: 0 15px; line-height: 28px; font-size: 13.6px; color: #666; }
.rtab.active { margin-left: -3px; height: 25px; width: 57px; text-align: center; padding: 0; color: #1596d8; border-bottom: 3px solid #0f93d6; }
.groups { display: flex; height: 64px; }
.group { display: flex; flex-direction: column; align-items: center; border-right: 3px solid #e6e6e6; }
.group:last-child { border-right: 0; }
.g-create { width: 106px; padding-left: 30px; }
.g-addin { width: 99px; }
.g-util { width: 121px; }
.g-inspect { width: 334px; }
.g-select { width: 76px; }
.g-icons { height: 46px; display: flex; align-items: flex-start; }
.util-icons { gap: 24px; }
.inspect-icons { gap: 10px; padding-left: 3px; }
.g-inspect .g-label { padding-left: 6px; }
.select-icon { margin-top: -3px; height: 49px; }
.g-label { display: flex; align-items: center; gap: 3px; height: 18px; font-size: 13px; color: #666; letter-spacing: .3px; }

.caret { width: 0; height: 0; flex: none; display: block; border-style: solid; border-color: #777 transparent transparent; }
.c-lg { border-width: 6px 4.5px 0; }
.c-sm { border-width: 5px 3.5px 0; }
.dark { border-top-color: #333; }
.light { border-top-color: #a3a3a3; }

/* canvas */
.viewport { position: relative; flex: 1; min-height: 0; background: #fff; }
.scene { position: absolute; inset: 0; width: 100%; height: 100%; }
.soft { filter: blur(1.5px); }
.cube-t { font: 26px "Noto Sans CJK SC", sans-serif; fill: #c6c6c6; }
.axis-y { font: 700 15px "Liberation Sans", sans-serif; fill: #90ea90; }
.axis-z { font: 700 15px "Liberation Sans", sans-serif; fill: #a6a6f2; }

.panel {
  position: absolute; left: 5px; width: 375px; height: 31px; display: flex; align-items: center;
  background: #f0f0f0; border: 1px solid #cfcfcf; padding: 0 0 2px 5px;
}
.browser { top: 4px; }
.notes { top: 759px; border-width: 0 0 0 1px; padding-left: 31px; }
.rew { margin-right: 14px; }
.panel-title { font-size: 13px; color: #9a9a9a; letter-spacing: .4px; }
.panel-btn { margin-left: auto; margin-right: 9px; }
.panel-grip { width: 3px; height: 13px; border-left: 1px solid #999; border-right: 1px solid #ccc; margin-right: 2px; }

.tree-scroll { position: absolute; left: 10px; top: 41px; width: 7px; height: 689px; background: #cbcbcb; }
.tree-thumb { display: block; height: 108px; background: #a9a9a9; border-radius: 3px; }

.tree { position: absolute; left: 0; top: 41px; display: flex; flex-direction: column; gap: 5px; }
.row { display: flex; align-items: center; height: 25px; }
.d0 { margin-left: 26px; }
.d1 { margin-left: 50px; }
.d2 { margin-left: 95px; }
.tw { display: block; flex: none; }
.tw.open { width: 14px; height: 14px; background: linear-gradient(135deg, #f4f4f4, #444 75%); clip-path: polygon(100% 0, 100% 100%, 0 100%); }
.d1 .tw.open { margin-right: 9px; }
.d0 .tw.open { margin-right: 10px; }
.tw.closed { width: 12px; height: 15px; margin-right: 11px; background: #555; clip-path: polygon(0 0, 100% 50%, 0 100%, 0 0, 2px 2.5px, 2px 12.5px, 10px 7.5px, 2px 2.5px); }
.pill { display: flex; align-items: center; height: 25px; background: #f3f3f3; }
.ic { width: 20px; height: 20px; }
.p0 { padding: 0 8px 0 4px; gap: 7px; }
.comp {
  width: 103px; height: 20px; display: flex; align-items: center; background: #999; color: #fff;
  font-weight: 700; font-size: 13px;
}
.comp span { margin-left: 19px; white-space: nowrap; }
.radio { margin-left: -3px; }
.p1 { padding: 0 12px 0 3px; }
.p1 .lab { margin-left: 18px; }
.p1e { padding: 0 14px 0 3px; gap: 11px; }
.p1e .lab { margin-left: 7px; }
.lab { letter-spacing: .5px; color: #444; }
.p2 { padding: 0 13px 0 4px; gap: 11px; }
.lab2 { margin-left: 6px; color: #444; letter-spacing: .7px; }

.navbar {
  position: absolute; left: 801px; bottom: 4px; width: 316px; height: 30px; background: #f5f5f5;
  display: flex; align-items: center; padding-left: 3px;
}
.navbar .caret { margin-left: 5px; }
.n-look { margin-left: 7px; }
.n-pan { margin-left: 12px; }
.n-zoom { margin-left: 12px; }
.n-fit { margin-left: 11px; }
.n-disp { margin-left: 16px; }
.n-grid { margin-left: 10px; }
.n-view { margin-left: 8px; }

/* timeline */
.timeline { position: relative; height: 63px; flex: none; display: flex; background: #f0f0f0; border-top: 2px solid #cfcfcf; }
.h-thumb { position: absolute; left: 1075px; top: 0; width: 231px; height: 8px; background: #c9c9c9; border-radius: 0 0 5px 5px; }
.playback { width: 178px; display: flex; gap: 15px; padding: 26px 0 0 13px; }
.track { width: 1680px; padding-top: 17px; }
.tl-items { display: flex; }
.tl { position: relative; width: 30px; height: 33px; display: flex; flex-direction: column; align-items: center; }
.tl svg { width: 20px; height: 24px; }
.tl::after { content: ""; width: 2px; height: 9px; background: #d4d4d4; }
.mark::before {
  content: "+"; position: absolute; left: 7px; top: 28px; width: 12px; height: 12px; z-index: 1;
  background: #b4b8c0; border-radius: 2px; color: #222; font: 700 12px/12px "Liberation Sans", sans-serif; text-align: center;
}
.tl-line {
  height: 3px; margin: 0 -6px;
  background: linear-gradient(90deg, #ccc 0 5px, transparent 5px 7px, #ccc 7px 11px, transparent 11px 13px, #ccc 13px calc(100% - 13px), transparent calc(100% - 13px) calc(100% - 11px), #ccc calc(100% - 11px) calc(100% - 7px), transparent calc(100% - 7px) calc(100% - 5px), #ccc calc(100% - 5px));
}
.tl-gear { margin: 25px 0 0 24px; }
```
